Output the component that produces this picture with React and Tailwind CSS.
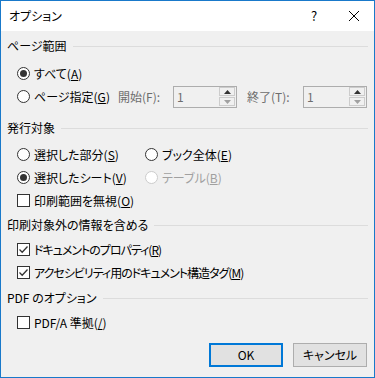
import React from 'react'

const font = { fontFamily: '"Noto Sans CJK JP", "Noto Sans", sans-serif' }

function Radio({ checked, disabled, label, k, className = '' }) {
    return (
        <div className={`flex items-center h-[23px] shrink-0 whitespace-nowrap ${className}`}>
            <span
                className={`w-[13px] h-[13px] shrink-0 rounded-full border bg-white flex items-center justify-center ${
                    disabled ? 'border-[#cccccc]' : 'border-[#333333]'
                }`}
            >
                {checked && <span className="w-[7px] h-[7px] rounded-full bg-[#333333]" />}
            </span>
            <span className={`ml-[4px] ${disabled ? 'text-[#a0a0a0]' : 'text-black'}`}>
                {label}(<u>{k}</u>)
            </span>
        </div>
    )
}

function Check({ checked, label, k, tight }) {
    return (
        <div className="flex items-center h-[23px] whitespace-nowrap">
            <span className="w-[13px] h-[13px] shrink-0 border border-[#333333] bg-white flex items-center justify-center">
                {checked && (
                    <svg width="11" height="11" viewBox="0 0 11 11">
                        <path d="M1.5 5.5 L4.2 8.2 L9.5 2.5" fill="none" stroke="#333333" strokeWidth="1.3" />
                    </svg>
                )}
            </span>
            <span className={`ml-[4px] ${tight ? 'tracking-[-1px]' : ''}`}>
                {label}(<u>{k}</u>)
            </span>
        </div>
    )
}

function Header({ children, className = '' }) {
    return (
        <div className={`flex items-center h-4 ${className}`}>
            <span className="whitespace-nowrap">{children}</span>
            <span className="flex-1 h-px bg-[#dcdcdc] ml-[6px]" />
        </div>
    )
}

function Spin() {
    return (
        <div className="w-[64px] h-[22px] shrink-0 border border-[#adadad] bg-[#f0f0f0] flex items-center justify-between pl-[3px] pr-px">
            <span className="text-[#6d6d6d]">1</span>
            <div className="flex flex-col gap-px">
                <div className="w-[16px] h-[9px] border border-[#cccccc] bg-[#f0f0f0] flex items-center justify-center">
                    <svg width="7" height="4" viewBox="0 0 7 4"><path d="M0 4 L3.5 0 L7 4 Z" fill="#333333" /></svg>
                </div>
                <div className="w-[16px] h-[9px] border border-[#cccccc] bg-[#f0f0f0] flex items-center justify-center">
                    <svg width="7" height="4" viewBox="0 0 7 4"><path d="M0 0 L3.5 4 L7 0 Z" fill="#a0a0a0" /></svg>
                </div>
            </div>
        </div>
    )
}

export default function App() {
    return (
        <div
            className="w-[375px] h-[378px] border border-[#1979ca] bg-[#f0f0f0] flex flex-col text-[12px] leading-4 text-black overflow-hidden [font-feature-settings:'palt']"
            style={font}
        >
            <div className="h-[30px] bg-white flex items-center pl-[8px] shrink-0">
                <span className="flex-1 text-[12px]">オプション</span>
                <span className="w-[20px] text-center mr-[24px] text-[13px]">?</span>
                <svg width="12" height="12" viewBox="0 0 12 12" className="mr-[14px]">
                    <path d="M1 1 L11 11 M11 1 L1 11" stroke="#000" strokeWidth="1" />
                </svg>
            </div>

            <div className="pl-[6px] pr-[6px]">
                <Header className="mt-[7px]">ページ範囲</Header>
                <div className="pl-[10px] mt-[8px]">
                    <Radio checked label="すべて" k="A" />
                    <div className="flex items-center whitespace-nowrap">
                        <Radio label="ページ指定" k="G" className="w-[101px]" />
                        <span className="w-[55px] shrink-0 text-[#6d6d6d]">開始(F):</span>
                        <Spin />
                        <span className="ml-[10px] w-[56px] shrink-0 text-[#6d6d6d]">終了(T):</span>
                        <Spin />
                    </div>
                </div>

                <Header className="mt-[12px]">発行対象</Header>
                <div className="pl-[10px] mt-[7px]">
                    <div className="flex">
                        <Radio label="選択した部分" k="S" className="w-[128px]" />
                        <Radio label="ブック全体" k="E" />
                    </div>
                    <div className="flex">
                        <Radio checked label="選択したシート" k="V" className="w-[128px]" />
                        <Radio disabled label="テーブル" k="B" />
                    </div>
                    <Check label="印刷範囲を無視" k="O" />
                </div>

                <Header className="mt-[5px]">印刷対象外の情報を含める</Header>
                <div className="pl-[10px] mt-[5px]">
                    <Check checked tight label="ドキュメントのプロパティ" k="R" />
                    <Check checked tight label="アクセシビリティ用のドキュメント構造タグ" k="M" />
                </div>

                <Header className="mt-[6px]">PDF のオプション</Header>
                <div className="pl-[10px] mt-[5px]">
                    <Check label="PDF/A 準拠" k="/" />
                </div>

                <div className="flex justify-end gap-[10px] mt-[9px] mr-[1px]">
                    <button className="w-[74px] h-[24px] border-2 border-[#0078d7] bg-[#e1e1e1]">OK</button>
                    <button className="w-[74px] h-[24px] border border-[#adadad] bg-[#e1e1e1]">キャンセル</button>
                </div>
            </div>
        </div>
    )
}
